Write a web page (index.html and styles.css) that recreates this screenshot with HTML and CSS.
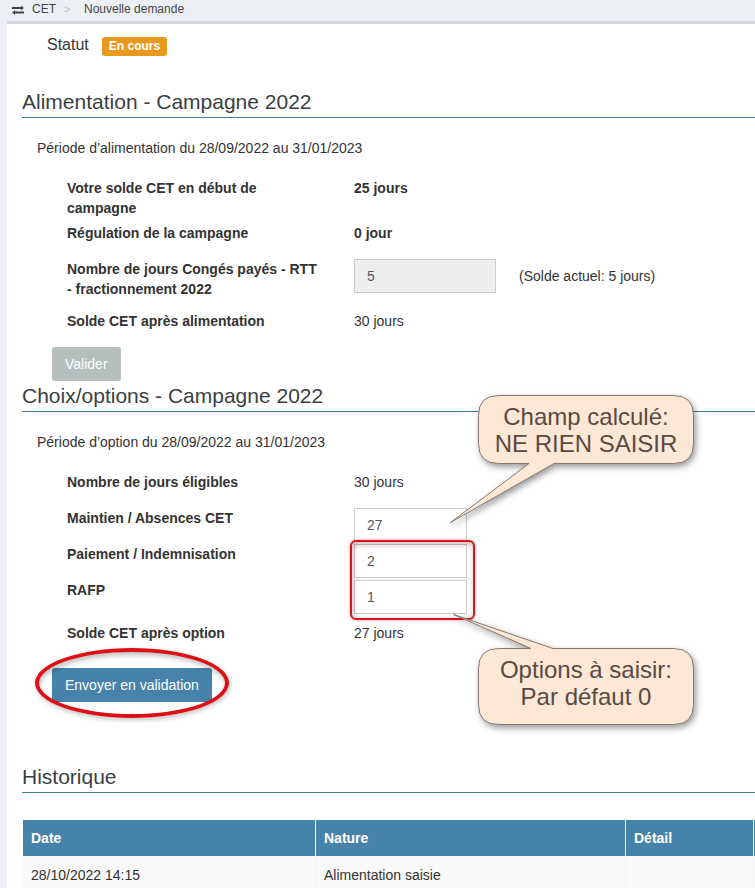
FILE: index.html
```html
<!DOCTYPE html>
<html lang="fr">
<head>
  <meta charset="UTF-8">
  <title>CET - Nouvelle demande</title>
  <meta name="viewport" content="width=device-width, initial-scale=1">
  <link rel="stylesheet" href="styles.css">
</head>
<body>

  <nav class="breadcrumb">
    <svg class="icon" viewBox="0 0 12 12" aria-hidden="true">
      <path d="M0 3h9V1.500L12 4 9 6.200V5H0zM12 9.500H3V11L0 8.500 3 6.300V7.500h9z"/>
    </svg>
    <span>CET</span>
    <span class="sep">&gt;</span>
    <span>Nouvelle demande</span>
  </nav>

  <main class="panel">
    <div class="status">
      <span>Statut</span>
      <span class="badge">En cours</span>
    </div>

    <section>
      <h2>Alimentation - Campagne 2022</h2>
      <p class="period">Période d’alimentation du 28/09/2022 au 31/01/2023</p>
      <form class="form">
        <div class="row">
          <span class="label">Votre solde CET en début de campagne</span>
          <b>25 jours</b>
        </div>
        <div class="row">
          <span class="label">Régulation de la campagne</span>
          <b>0 jour</b>
        </div>
        <div class="row row-conges">
          <label class="label" for="conges">Nombre de jours Congés payés - RTT - fractionnement 2022</label>
          <div class="field">
            <input type="text" id="conges" class="wide" value="5" disabled>
            <span>(Solde actuel: 5 jours)</span>
          </div>
        </div>
        <div class="row row-total">
          <span class="label">Solde CET après alimentation</span>
          <span>30 jours</span>
        </div>
        <button type="button" class="btn" disabled>Valider</button>
      </form>
    </section>

    <section class="options">
      <h2>Choix/options - Campagne 2022</h2>
      <p class="period">Période d’option du 28/09/2022 au 31/01/2023</p>
      <form class="form">
        <div class="row row-eligible">
          <span class="label">Nombre de jours éligibles</span>
          <span>30 jours</span>
        </div>
        <div class="row row-input">
          <label class="label" for="maintien">Maintien / Absences CET</label>
          <input type="text" id="maintien" value="27">
        </div>
        <div class="row row-input">
          <label class="label" for="paiement">Paiement / Indemnisation</label>
          <input type="text" id="paiement" value="2">
        </div>
        <div class="row row-input">
          <label class="label" for="rafp">RAFP</label>
          <input type="text" id="rafp" value="1">
        </div>
        <div class="row row-after">
          <span class="label">Solde CET après option</span>
          <span>27 jours</span>
        </div>
        <div class="submit">
          <button type="button" class="btn btn-primary">Envoyer en validation</button>
          <span class="circle"></span>
        </div>
      </form>

      <!-- annotations -->
      <span class="frame"></span>
      <div class="callout callout-top">
        <svg width="245" height="128" viewBox="0 0 245 128" aria-hidden="true">
          <path d="M48.500 0.500H223.500Q243.500 0.500 243.500 20.500V48.500Q243.500 68.500 223.500 68.500H104L0.500 127.500 79 68.500H48.500Q28.500 68.500 28.500 48.500V20.500Q28.500 0.500 48.500 0.500Z"/>
        </svg>
        <p>Champ calculé:<br>NE RIEN SAISIR</p>
      </div>
      <div class="callout callout-bottom">
        <svg width="242" height="112" viewBox="0 0 242 112" aria-hidden="true">
          <path d="M45.500 34.500H78L0.500 0.500 100 34.500H220.500Q240.500 34.500 240.500 54.500V90.500Q240.500 110.500 220.500 110.500H45.500Q25.500 110.500 25.500 90.500V54.500Q25.500 34.500 45.500 34.500Z"/>
        </svg>
        <p>Options à saisir:<br>Par défaut 0</p>
      </div>
    </section>

    <section class="history">
      <h2>Historique</h2>
      <table>
        <thead>
          <tr>
            <th class="col-date">Date</th>
            <th class="col-nature">Nature</th>
            <th class="col-detail">Détail</th>
            <th></th>
          </tr>
        </thead>
        <tbody>
          <tr>
            <td>28/10/2022 14:15</td>
            <td>Alimentation saisie</td>
            <td></td>
            <td></td>
          </tr>
        </tbody>
      </table>
    </section>
  </main>

</body>
</html>
```
FILE: styles.css
```css
* {
  box-sizing: border-box;
}
body {
  margin: 0;
  font-family: "Liberation Sans", Arial, sans-serif;
  font-size: 14px;
  line-height: 20px;
  color: #333;
  background: #ecf0f5;
  overflow-x: hidden;
}
h2 {
  margin: 0;
  font-size: 21px;
  font-weight: normal;
  line-height: 30px;
  color: #3a3f41;
  border-bottom: 1px solid #3c8291;
}

/* breadcrumb */
.breadcrumb {
  display: flex;
  align-items: center;
  padding: 0 0 2px 12px;
  font-size: 12px;
  line-height: 19px;
  color: #444;
}
.icon {
  width: 12px;
  height: 12px;
  margin-right: 8px;
  fill: #444;
}
.sep {
  width: 28px;
  padding-left: 8px;
  font-size: 11px;
  color: #bbb;
}

.panel {
  margin-left: 7px;
  padding-left: 15px;
  background: #fff;
  border-top: 3px solid #d2d6de;
}

/* status */
.status {
  display: flex;
  align-items: baseline;
  gap: 13px;
  padding: 11px 0 0 25px;
  margin-bottom: 31px;
  font-size: 16px;
}
.badge {
  padding: 0 7px;
  font-size: 12px;
  font-weight: bold;
  line-height: 19px;
  color: #fff;
  background: #e8981d;
  border-radius: 3px;
}

/* forms */
.period {
  margin: 20px 15px;
}
.form {
  padding-left: 30px;
}
.row {
  display: grid;
  grid-template-columns: 257px 1fr;
  align-items: start;
  column-gap: 30px;
  padding-left: 15px;
  margin-bottom: 5px;
}
.label {
  font-weight: bold;
}
.row-conges {
  margin-top: 16px;
  margin-bottom: 12px;
}
.row-total,
.row-eligible {
  margin-bottom: 16px;
}
.row-input {
  margin-bottom: 2px;
}
.row-after {
  margin-top: 9px;
  margin-bottom: 25px;
}
.field {
  display: flex;
  align-items: center;
  gap: 23px;
}
input {
  width: 113px;
  height: 34px;
  padding: 0 12px;
  font: inherit;
  color: #555;
  background: #fff;
  border: 1px solid #ccc;
  border-radius: 0;
}
.wide {
  width: 142px;
}
input:disabled {
  background: #eee;
}
.btn {
  display: block;
  height: 34px;
  padding: 0 13px;
  font: inherit;
  color: #fff;
  background: #b7bfbe;
  border: 0;
  border-radius: 3px;
}
.btn-primary {
  background: #4682a9;
}

/* annotations */
.options {
  position: relative;
}
.submit {
  position: relative;
  width: max-content;
}
.circle {
  position: absolute;
  inset: -20px -17px -16px;
  border: 4px solid #dc1016;
  border-radius: 50%;
  box-shadow: 1px 2px 5px rgba(0, 0, 0, 0.25), inset 1px 3px 5px rgba(0, 0, 0, 0.25);
  pointer-events: none;
}
.frame {
  position: absolute;
  left: 328px;
  top: 159px;
  width: 125px;
  height: 80px;
  border: 2px solid #d8141c;
  border-radius: 6px;
  box-shadow: 0 0 3px rgba(230, 40, 40, 0.5), inset 1px 2px 6px rgba(90, 0, 0, 0.3);
  pointer-events: none;
}
.callout {
  position: absolute;
  pointer-events: none;
}
.callout svg {
  display: block;
  fill: #fde7d5;
  stroke: #85786f;
  filter: drop-shadow(2px 3px 3px rgba(0, 0, 0, 0.4));
}
.callout p {
  position: absolute;
  right: 1px;
  width: 216px;
  margin: 0;
  font-size: 24px;
  line-height: 27px;
  text-align: center;
  color: #594a42;
}
.callout-top {
  left: 428px;
  top: 14px;
}
.callout-top p {
  top: 8px;
}
.callout-bottom {
  left: 431px;
  top: 233px;
}
.callout-bottom p {
  top: 42px;
}

/* history */
.history {
  margin-top: 60px;
}
table {
  width: 100%;
  margin-top: 27px;
  table-layout: fixed;
  border-collapse: collapse;
  border-left: 1px solid #fff;
}
th,
td {
  height: 36px;
  padding: 0 8px;
  text-align: left;
}
th {
  color: #fff;
  background: #4682a9;
}
th + th {
  border-left: 1px solid #fff;
}
td {
  height: 38px;
  background: #f9f9f9;
}
td + td {
  border-left: 1px solid #f4f4f4;
}
.col-date {
  width: 293px;
}
.col-nature {
  width: 310px;
}
.col-detail {
  width: 128px;
}
th:last-child,
td:last-child {
  padding: 0;
}
```
